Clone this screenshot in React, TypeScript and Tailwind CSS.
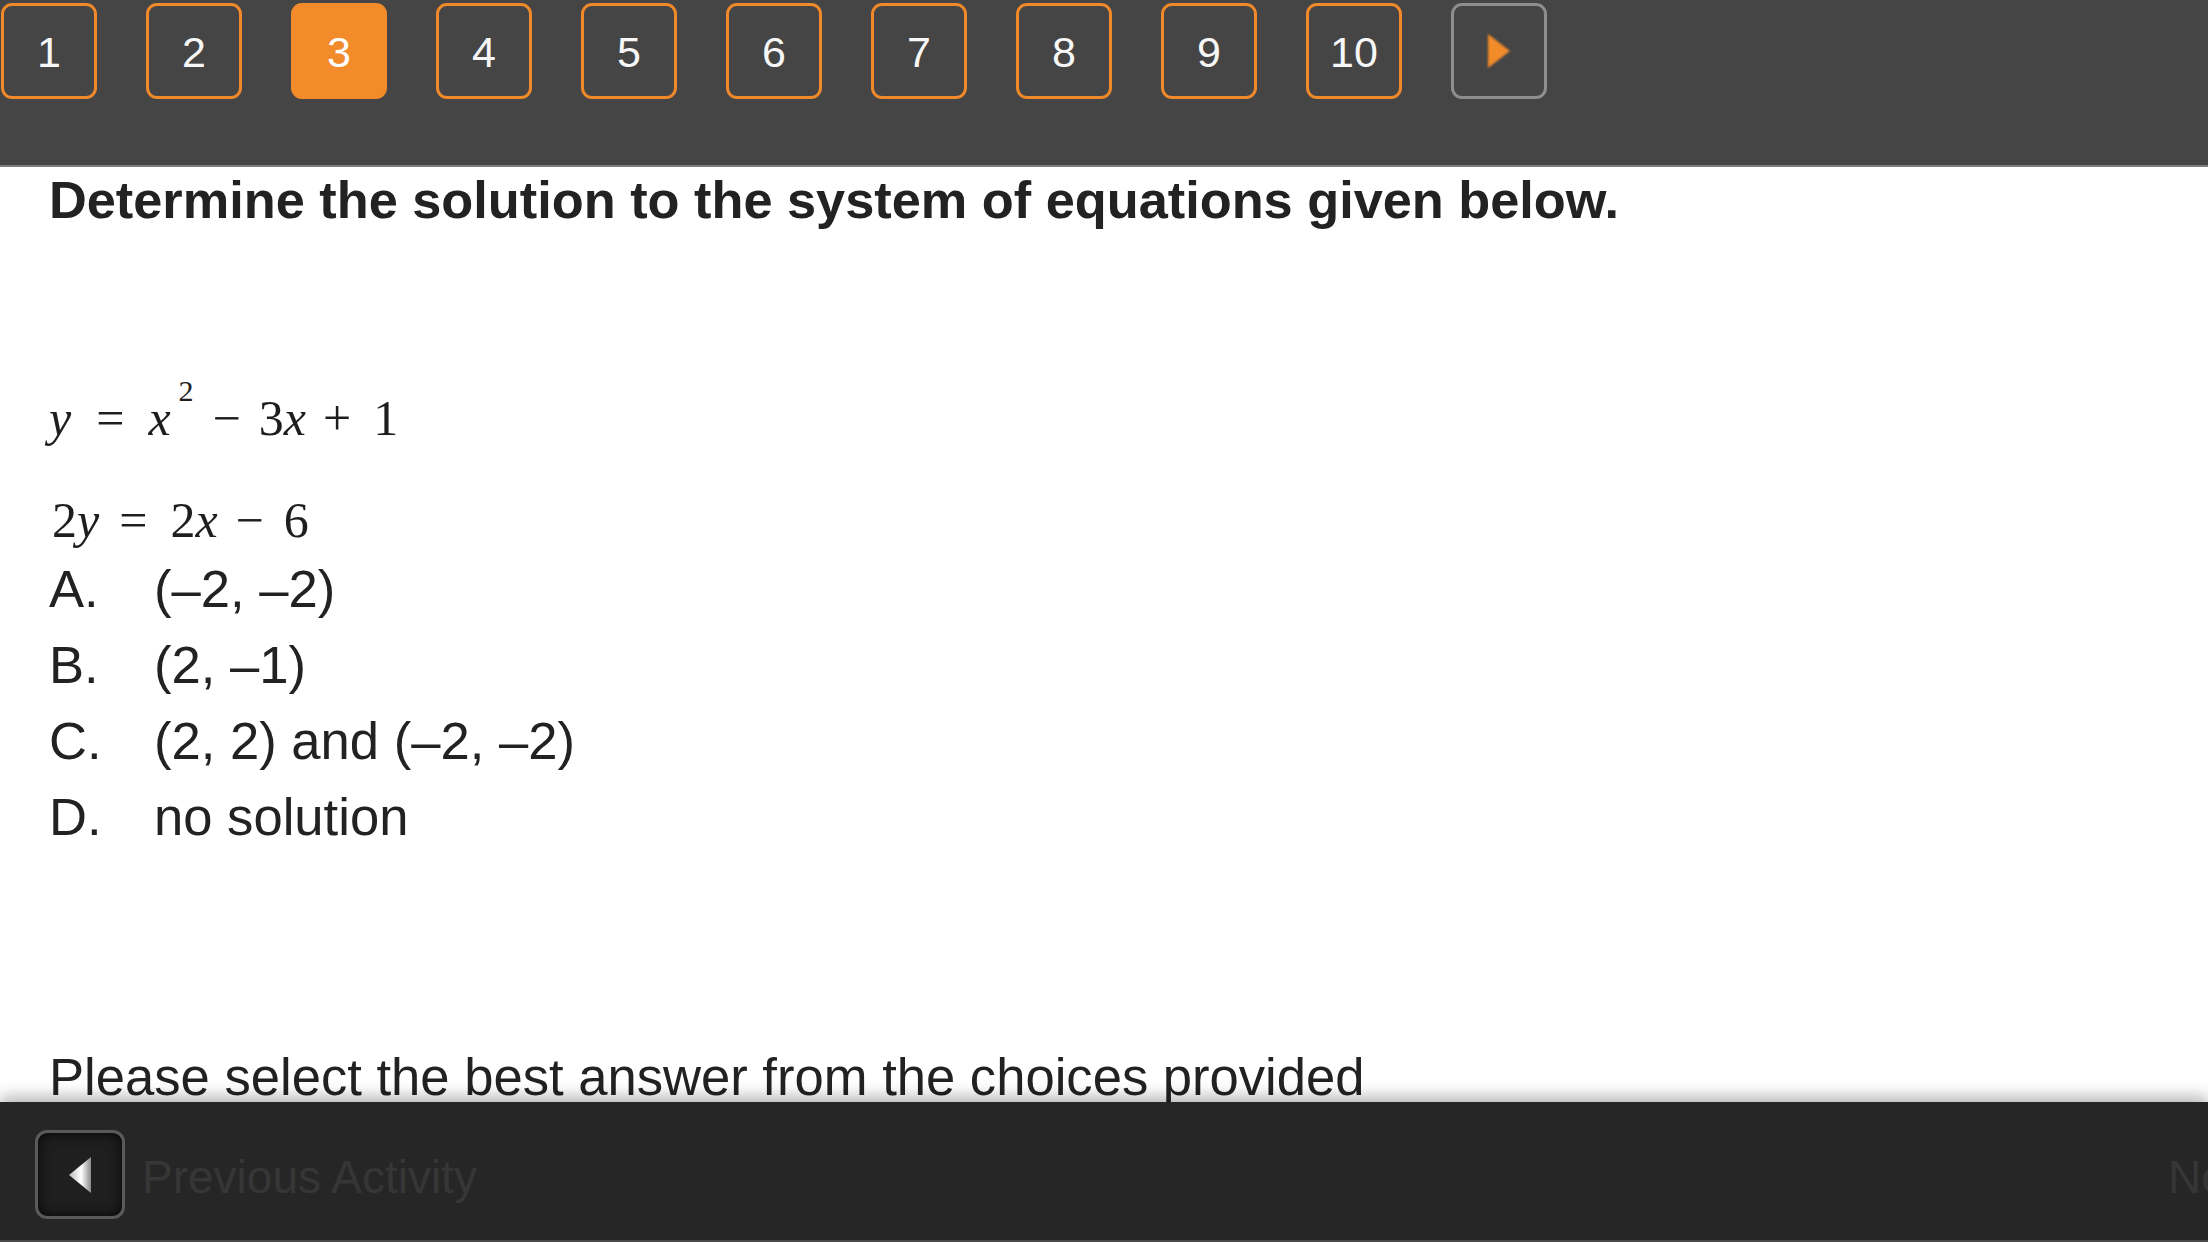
import React from "react";

const sans = { fontFamily: '"Liberation Sans", Arial, Helvetica, sans-serif' };
const serif = { fontFamily: '"Liberation Serif", "Times New Roman", serif' };

function NumButton({ n, active }: { n: number; active?: boolean }) {
  return (
    <div
      className={
        active
          ? "w-[96px] h-[96px] shrink-0 rounded-[11px] border-[3px] border-[#f28b2a] bg-[#f28b2a] flex items-center justify-center text-[43px] text-white leading-none"
          : "w-[96px] h-[96px] shrink-0 rounded-[11px] border-[3px] border-[#f0892a] flex items-center justify-center text-[43px] text-[#f7f7f7] leading-none"
      }
    >
      <span className="pt-[2px]">{n}</span>
    </div>
  );
}

export default function App() {
  const nums = [1, 2, 3, 4, 5, 6, 7, 8, 9, 10];
  return (
    <div className="w-[2208px] h-[1242px] overflow-hidden flex flex-col bg-white" style={sans}>
      {/* Top navigation bar */}
      <div className="h-[167px] shrink-0 bg-[#454545] border-b-2 border-[#7c7c7c] flex items-start pl-[1px] pt-[3px] gap-[49px]">
        {nums.map((n) => (
          <NumButton key={n} n={n} active={n === 3} />
        ))}
        <div className="w-[96px] h-[96px] shrink-0 rounded-[11px] border-[3px] border-[#8e8e8e] flex items-center justify-center">
          <svg width="26" height="38" viewBox="0 0 26 38" className="blur-[0.8px]">
            <polygon points="2,2 24,19 2,36" fill="#f28b2a" />
          </svg>
        </div>
      </div>

      {/* Content */}
      <div className="flex-1 overflow-hidden pl-[49px] text-[#222222]">
        <h1 className="mt-[3px] text-[52.3px] font-bold leading-[60px] whitespace-nowrap">
          Determine the solution to the system of equations given below.
        </h1>

        <div className="mt-[158px] text-[50px] leading-[60px] text-[#1e1e1e] whitespace-nowrap flex items-baseline" style={serif}>
          <span className="italic">y</span>
          <span className="ml-[25px]">=</span>
          <span className="ml-[24px] italic">x</span>
          <sup className="ml-[8px] text-[30px] -top-[34px]">2</sup>
          <span className="ml-[19px]">−</span>
          <span className="ml-[18px]">3</span>
          <span className="italic">x</span>
          <span className="ml-[17px]">+</span>
          <span className="ml-[22px]">1</span>
        </div>

        <div className="mt-[42px] text-[50px] leading-[60px] text-[#1e1e1e] whitespace-nowrap flex items-baseline" style={serif}>
          <span className="ml-[3px]">2</span>
          <span className="italic">y</span>
          <span className="ml-[20px]">=</span>
          <span className="ml-[23px]">2</span>
          <span className="italic">x</span>
          <span className="ml-[18px]">−</span>
          <span className="ml-[20px]">6</span>
        </div>

        <div className="mt-[1px] flex flex-col text-[52.6px] leading-[76px] whitespace-nowrap">
          {[
            ["A.", "(–2, –2)"],
            ["B.", "(2, –1)"],
            ["C.", "(2, 2) and (–2, –2)"],
            ["D.", "no solution"],
          ].map(([l, t]) => (
            <div key={l} className="flex">
              <span className="w-[105px] shrink-0">{l}</span>
              <span>{t}</span>
            </div>
          ))}
        </div>

        <p className="mt-[184px] text-[52.6px] leading-[76px] whitespace-nowrap">
          Please select the best answer from the choices provided
        </p>
      </div>

      {/* Bottom bar */}
      <div className="relative z-10 h-[140px] shrink-0 bg-[#262626] border-b-2 border-[#4a4a4a] shadow-[0_-6px_14px_rgba(0,0,0,0.28)] flex items-start pt-[28px] pl-[35px]">
        <div className="w-[90px] h-[89px] shrink-0 rounded-[12px] border-[3px] border-[#5a5a5a] bg-[#1f1f1f] shadow-[inset_0_0_14px_rgba(0,0,0,0.85)] flex items-center justify-center">
          <svg width="22" height="36" viewBox="0 0 22 36" className="blur-[0.6px]">
            <defs>
              <linearGradient id="tri" x1="0" y1="0" x2="1" y2="0">
                <stop offset="0" stopColor="#b8b8b8" />
                <stop offset="0.55" stopColor="#ffffff" />
                <stop offset="1" stopColor="#8a8a8a" />
              </linearGradient>
            </defs>
            <polygon points="0,18 22,0 22,36" fill="url(#tri)" />
          </svg>
        </div>
        <span className="ml-[17px] pt-[3px] text-[46px] leading-[89px] text-[#363636] whitespace-nowrap">
          Previous Activity
        </span>
        <div className="flex-1" />
        <div className="w-[40px] shrink-0 overflow-visible">
          <span className="block pt-[3px] text-[46px] leading-[89px] text-[#363636] whitespace-nowrap">
            Next Activity
          </span>
        </div>
      </div>
    </div>
  );
}
